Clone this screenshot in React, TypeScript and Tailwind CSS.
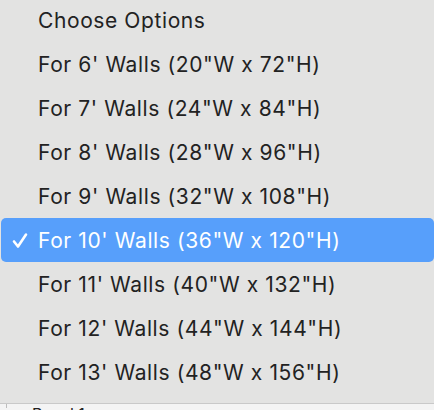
const options = [
  "Choose Options",
  "For 6' Walls (20\"W x 72\"H)",
  "For 7' Walls (24\"W x 84\"H)",
  "For 8' Walls (28\"W x 96\"H)",
  "For 9' Walls (32\"W x 108\"H)",
  "For 10' Walls (36\"W x 120\"H)",
  "For 11' Walls (40\"W x 132\"H)",
  "For 12' Walls (44\"W x 144\"H)",
  "For 13' Walls (48\"W x 156\"H)",
];

const selected = 5;

function Check() {
  return (
    <svg width="16" height="17" viewBox="0 0 16 17" fill="none">
      <path d="M2 9.5 L6 14.5 L14 2.5" stroke="white" strokeWidth="2.6" strokeLinecap="round" strokeLinejoin="round" />
    </svg>
  );
}

export default function App() {
  return (
    <div className="w-[434px] h-[410px] overflow-hidden bg-[#f4f4f4] font-['Inter',sans-serif]">
      <div className="h-[406px] bg-[#e3e3e2] border-b border-[#c9c9c9]">
        <div className="-mt-[2px]">
          {options.map((o, i) => (
            <div
              key={i}
              className={
                "h-[44px] flex items-center ml-[1px] rounded-[5px] " +
                (i === selected ? "bg-[#579ffb] text-white" : "text-[#222222]")
              }
            >
              <div className="w-[37px] flex justify-center">
                {i === selected && <Check />}
              </div>
              <span className="text-[21px] leading-none tracking-[0.6px]">{o}</span>
            </div>
          ))}
        </div>
      </div>
      <div className="relative h-[4px]">
        <div className="absolute left-[6px] top-0 h-[4px] w-px bg-[#bdbdbd]" />
        <span className="absolute left-[32px] top-[1px] text-[16px] leading-[18px] text-[#222]">Panel 1</span>
      </div>
    </div>
  );
}
